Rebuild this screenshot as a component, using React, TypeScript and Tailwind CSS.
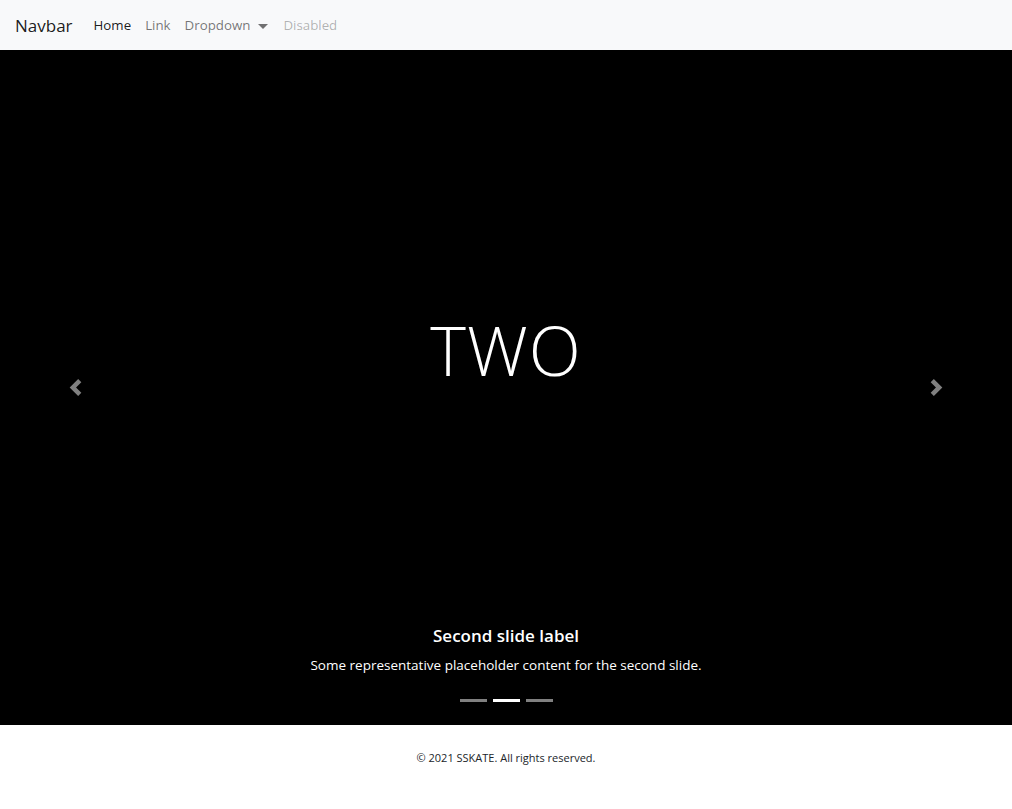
import React from "react";

export default function App() {
  const font = { fontFamily: '"Open Sans", "Noto Sans", sans-serif' };
  return (
    <div className="w-[1012px] h-[809px] flex flex-col bg-white" style={font}>
      <nav className="h-[50px] bg-[#f8f9fa] flex items-center px-[15px] pt-[2px]">
        <span className="text-[17px] text-[rgba(0,0,0,0.9)] mr-[14px]">Navbar</span>
        <div className="flex items-center text-[13.3px]">
          <span className="px-[7px] text-[rgba(0,0,0,0.9)]">Home</span>
          <span className="px-[7px] text-[rgba(0,0,0,0.55)]">Link</span>
          <span className="px-[7px] text-[rgba(0,0,0,0.55)] flex items-center">
            Dropdown
            <span className="ml-[8px] w-0 h-0 border-l-[5px] border-r-[5px] border-t-[5px] border-l-transparent border-r-transparent border-t-[rgba(0,0,0,0.55)]" />
          </span>
          <span className="pl-[8px] pr-[7px] text-[rgba(0,0,0,0.3)]">Disabled</span>
        </div>
      </nav>
      <div className="relative h-[675px] bg-black flex flex-col items-center">
        <div className="flex-1 w-full flex items-center justify-center pb-[75px]">
          <span className="text-white text-[68px] font-light tracking-[1px]">TWO</span>
        </div>
        <button className="absolute left-0 top-0 h-full w-[15%] flex items-center justify-center opacity-50">
          <svg width="17" height="17" viewBox="0 0 8 8" fill="white">
            <path d="M5.25 0l-4 4 4 4 1.5-1.5L4.25 4l2.5-2.5L5.25 0z" />
          </svg>
        </button>
        <button className="absolute right-0 top-0 h-full w-[15%] flex items-center justify-center opacity-50">
          <svg width="17" height="17" viewBox="0 0 8 8" fill="white">
            <path d="M2.75 0l-1.5 1.5L3.75 4l-2.5 2.5L2.75 8l4-4-4-4z" />
          </svg>
        </button>
        <div className="absolute left-[15%] right-[15%] bottom-[48px] flex flex-col items-center text-white">
          <h5 className="text-[17px] font-semibold leading-[24px]">Second slide label</h5>
          <p className="text-[13.5px] mt-[5px] leading-[24px]">Some representative placeholder content for the second slide.</p>
        </div>
        <div className="absolute bottom-[23px] left-0 right-0 flex justify-center gap-[6px]">
          <span className="w-[27px] h-[3px] bg-white opacity-50" />
          <span className="w-[27px] h-[3px] bg-white" />
          <span className="w-[27px] h-[3px] bg-white opacity-50" />
        </div>
      </div>
      <footer className="flex-1 flex justify-center pt-[25px]">
        <span className="text-[11px] leading-[16px] text-[#212529]">© 2021 SSKATE. All rights reserved.</span>
      </footer>
    </div>
  );
}
